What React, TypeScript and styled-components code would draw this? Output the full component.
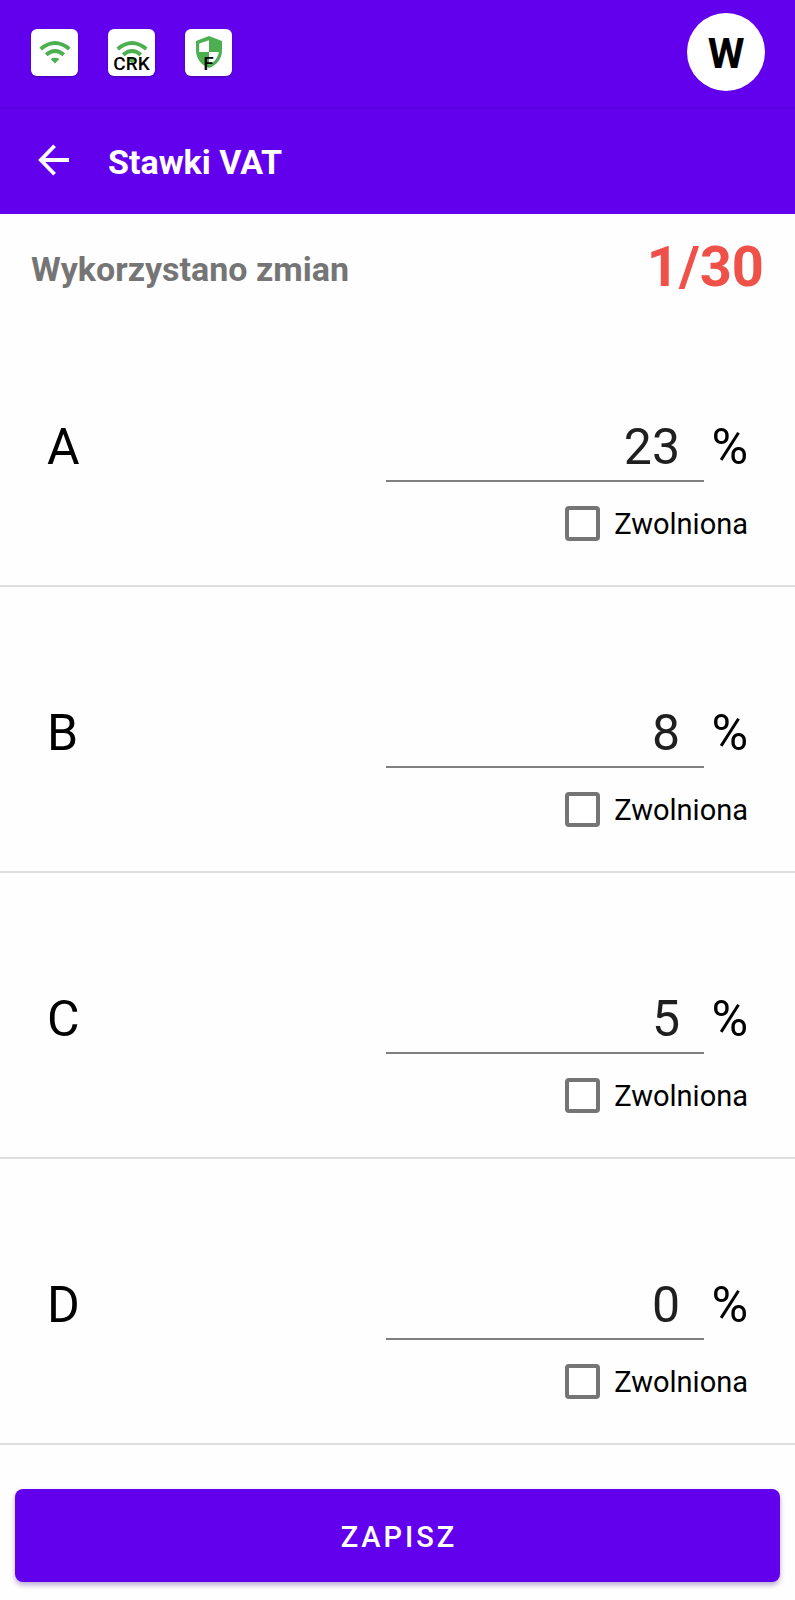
import React, { useState } from 'react';
import styled, { createGlobalStyle } from 'styled-components';

const PURPLE = '#6200ee';
const GREEN = '#4caf50';

const GlobalStyle = createGlobalStyle`
  * { box-sizing: border-box; }
  body {
    margin: 0;
    background: #fefefe;
    color: #000;
    font-family: Roboto, "Noto Sans", sans-serif;
  }
`;

const Screen = styled.div`
  display: flex;
  flex-direction: column;
  min-height: 100vh;
`;

const StatusBar = styled.header`
  display: flex;
  align-items: center;
  justify-content: space-between;
  height: 109px;
  padding: 0 30px 3px 31px;
  background: ${PURPLE};
  border-bottom: 2px solid #5c00e2;
`;

const StatusIcons = styled.div`
  display: flex;
  gap: 30px;
`;

const StatusTile = styled.div`
  display: grid;
  place-items: center;
  position: relative;
  width: 47px;
  height: 47px;
  border-radius: 6px;
  background: #fff;
  box-shadow: 0 1px 2px rgba(0, 0, 0, 0.3);
`;

const TileLabel = styled.span`
  position: absolute;
  left: 0;
  right: 0;
  bottom: 1px;
  font-size: 19px;
  line-height: 22px;
  font-weight: 500;
  text-align: center;
`;

const Avatar = styled.button`
  width: 78px;
  height: 78px;
  padding: 4px 0 0;
  border: 0;
  border-radius: 50%;
  background: #fff;
  color: #000;
  font-family: inherit;
  font-size: 42px;
  font-weight: 700;
  line-height: 48px;
`;

const AppBar = styled.nav`
  display: flex;
  align-items: center;
  gap: 32px;
  height: 105px;
  padding: 0 31px;
  background: ${PURPLE};
  color: #fff;
`;

const BackButton = styled.button`
  display: grid;
  place-items: center;
  width: 45px;
  height: 48px;
  padding: 0 0 3px;
  border: 0;
  background: none;
  color: inherit;
`;

const Title = styled.h1`
  margin: 0;
  font-size: 34px;
  line-height: 40px;
  font-weight: 700;
`;

const Usage = styled.section`
  display: flex;
  align-items: center;
  justify-content: space-between;
  height: 87px;
  padding: 18px 31px 0;
`;

const UsageLabel = styled.span`
  padding-top: 4px;
  color: #757575;
  font-size: 34px;
  line-height: 40px;
  font-weight: 700;
`;

const UsageCount = styled.strong`
  color: #ef5048;
  font-size: 56px;
  line-height: 64px;
  font-weight: 700;
`;

const RateList = styled.ul`
  margin: 0;
  padding: 0;
  list-style: none;
`;

const RateRow = styled.li`
  display: flex;
  flex-direction: column;
  align-items: flex-end;
  gap: 23px;
  padding: 118px 47px 44px;
  border-bottom: 2px solid #dedede;
`;

const RateLine = styled.div`
  display: flex;
  align-items: flex-start;
  width: 100%;
  font-size: 50px;
  line-height: 56px;
`;

const RateName = styled.label`
  flex: 1;
`;

const RateInput = styled.input`
  flex: 0 1 318px;
  min-width: 0;
  height: 63px;
  padding: 0 24px 5px 0;
  border: 0;
  border-bottom: 2px solid #808080;
  outline: 0;
  background: none;
  color: #1f1f1f;
  font: inherit;
  text-align: right;
`;

const Percent = styled.span`
  width: 44px;
  text-align: right;
`;

const Exempt = styled.label`
  display: flex;
  align-items: center;
  gap: 14px;
  font-size: 29px;
  line-height: 36px;
`;

const ExemptText = styled.span`
  padding-top: 2px;
  line-height: 34px;
`;

const ExemptBox = styled.input`
  appearance: none;
  width: 35px;
  height: 35px;
  margin: 0;
  border: 4px solid #757575;
  border-radius: 4px;
  background: #fff;

  &:checked {
    border-color: ${PURPLE};
    background: ${PURPLE};
  }
`;

const Footer = styled.footer`
  padding: 44px 15px 18px;
`;

const SaveButton = styled.button`
  display: block;
  width: 100%;
  height: 93px;
  padding: 2px 0 0;
  border: 0;
  border-radius: 8px;
  background: ${PURPLE};
  box-shadow: 0 3px 5px rgba(60, 20, 130, 0.35);
  color: #fff;
  font-family: inherit;
  font-size: 29px;
  font-weight: 500;
  letter-spacing: 3px;
  text-indent: 3px;
`;

function WifiIcon() {
  return (
    <svg width="32" height="24" viewBox="0 0 32 24" fill="none" stroke={GREEN} strokeWidth="3.9" aria-hidden="true">
      <path d="M1.7 9Q16-3 30.3 9" />
      <path d="M7.2 14.8Q16 7.4 24.8 14.8" />
      <path d="M11.6 18.9Q16 16.4 20.4 18.9L16 23.4Z" fill={GREEN} stroke="none" />
    </svg>
  );
}

function ShieldIcon() {
  return (
    <svg width="28" height="34" viewBox="0 0 28 34" aria-hidden="true">
      <path d="M14 1L27 6V15.5C27 23.5 21.6 30.4 14 33C6.4 30.4 1 23.5 1 15.5V6Z" fill={GREEN} />
      <path d="M14 5.2V17H4.2V8.6Z" fill="#fff" />
      <path d="M14 17H23.8C23 22.6 19.4 27.2 14 29.6Z" fill="#fff" />
    </svg>
  );
}

function BackIcon() {
  return (
    <svg width="32" height="32" viewBox="0 0 32 32" fill="none" stroke="currentColor" strokeWidth="3.8" aria-hidden="true">
      <path d="M31 16H3M16.6 1.8L2.8 16L16.6 30.2" />
    </svg>
  );
}

const initialRates = [
  { name: 'A', value: '23', exempt: false },
  { name: 'B', value: '8', exempt: false },
  { name: 'C', value: '5', exempt: false },
  { name: 'D', value: '0', exempt: false },
];

export default function App() {
  const [rates, setRates] = useState(initialRates);

  const update = (name: string, change: Partial<(typeof initialRates)[number]>) =>
    setRates((all) => all.map((rate) => (rate.name === name ? { ...rate, ...change } : rate)));

  return (
    <Screen>
      <GlobalStyle />
      <StatusBar>
        <StatusIcons>
          <StatusTile>
            <WifiIcon />
          </StatusTile>
          <StatusTile>
            <WifiIcon />
            <TileLabel>CRK</TileLabel>
          </StatusTile>
          <StatusTile>
            <ShieldIcon />
            <TileLabel>F</TileLabel>
          </StatusTile>
        </StatusIcons>
        <Avatar type="button">W</Avatar>
      </StatusBar>
      <AppBar>
        <BackButton type="button" aria-label="Wstecz">
          <BackIcon />
        </BackButton>
        <Title>Stawki VAT</Title>
      </AppBar>
      <main>
        <Usage>
          <UsageLabel>Wykorzystano zmian</UsageLabel>
          <UsageCount>1/30</UsageCount>
        </Usage>
        <RateList>
          {rates.map((rate) => (
            <RateRow key={rate.name}>
              <RateLine>
                <RateName htmlFor={`rate-${rate.name}`}>{rate.name}</RateName>
                <RateInput
                  id={`rate-${rate.name}`}
                  inputMode="decimal"
                  value={rate.value}
                  onChange={(e) => update(rate.name, { value: e.target.value })}
                />
                <Percent>%</Percent>
              </RateLine>
              <Exempt>
                <ExemptBox
                  type="checkbox"
                  checked={rate.exempt}
                  onChange={(e) => update(rate.name, { exempt: e.target.checked })}
                />
                <ExemptText>Zwolniona</ExemptText>
              </Exempt>
            </RateRow>
          ))}
        </RateList>
      </main>
      <Footer>
        <SaveButton type="button">ZAPISZ</SaveButton>
      </Footer>
    </Screen>
  );
}
